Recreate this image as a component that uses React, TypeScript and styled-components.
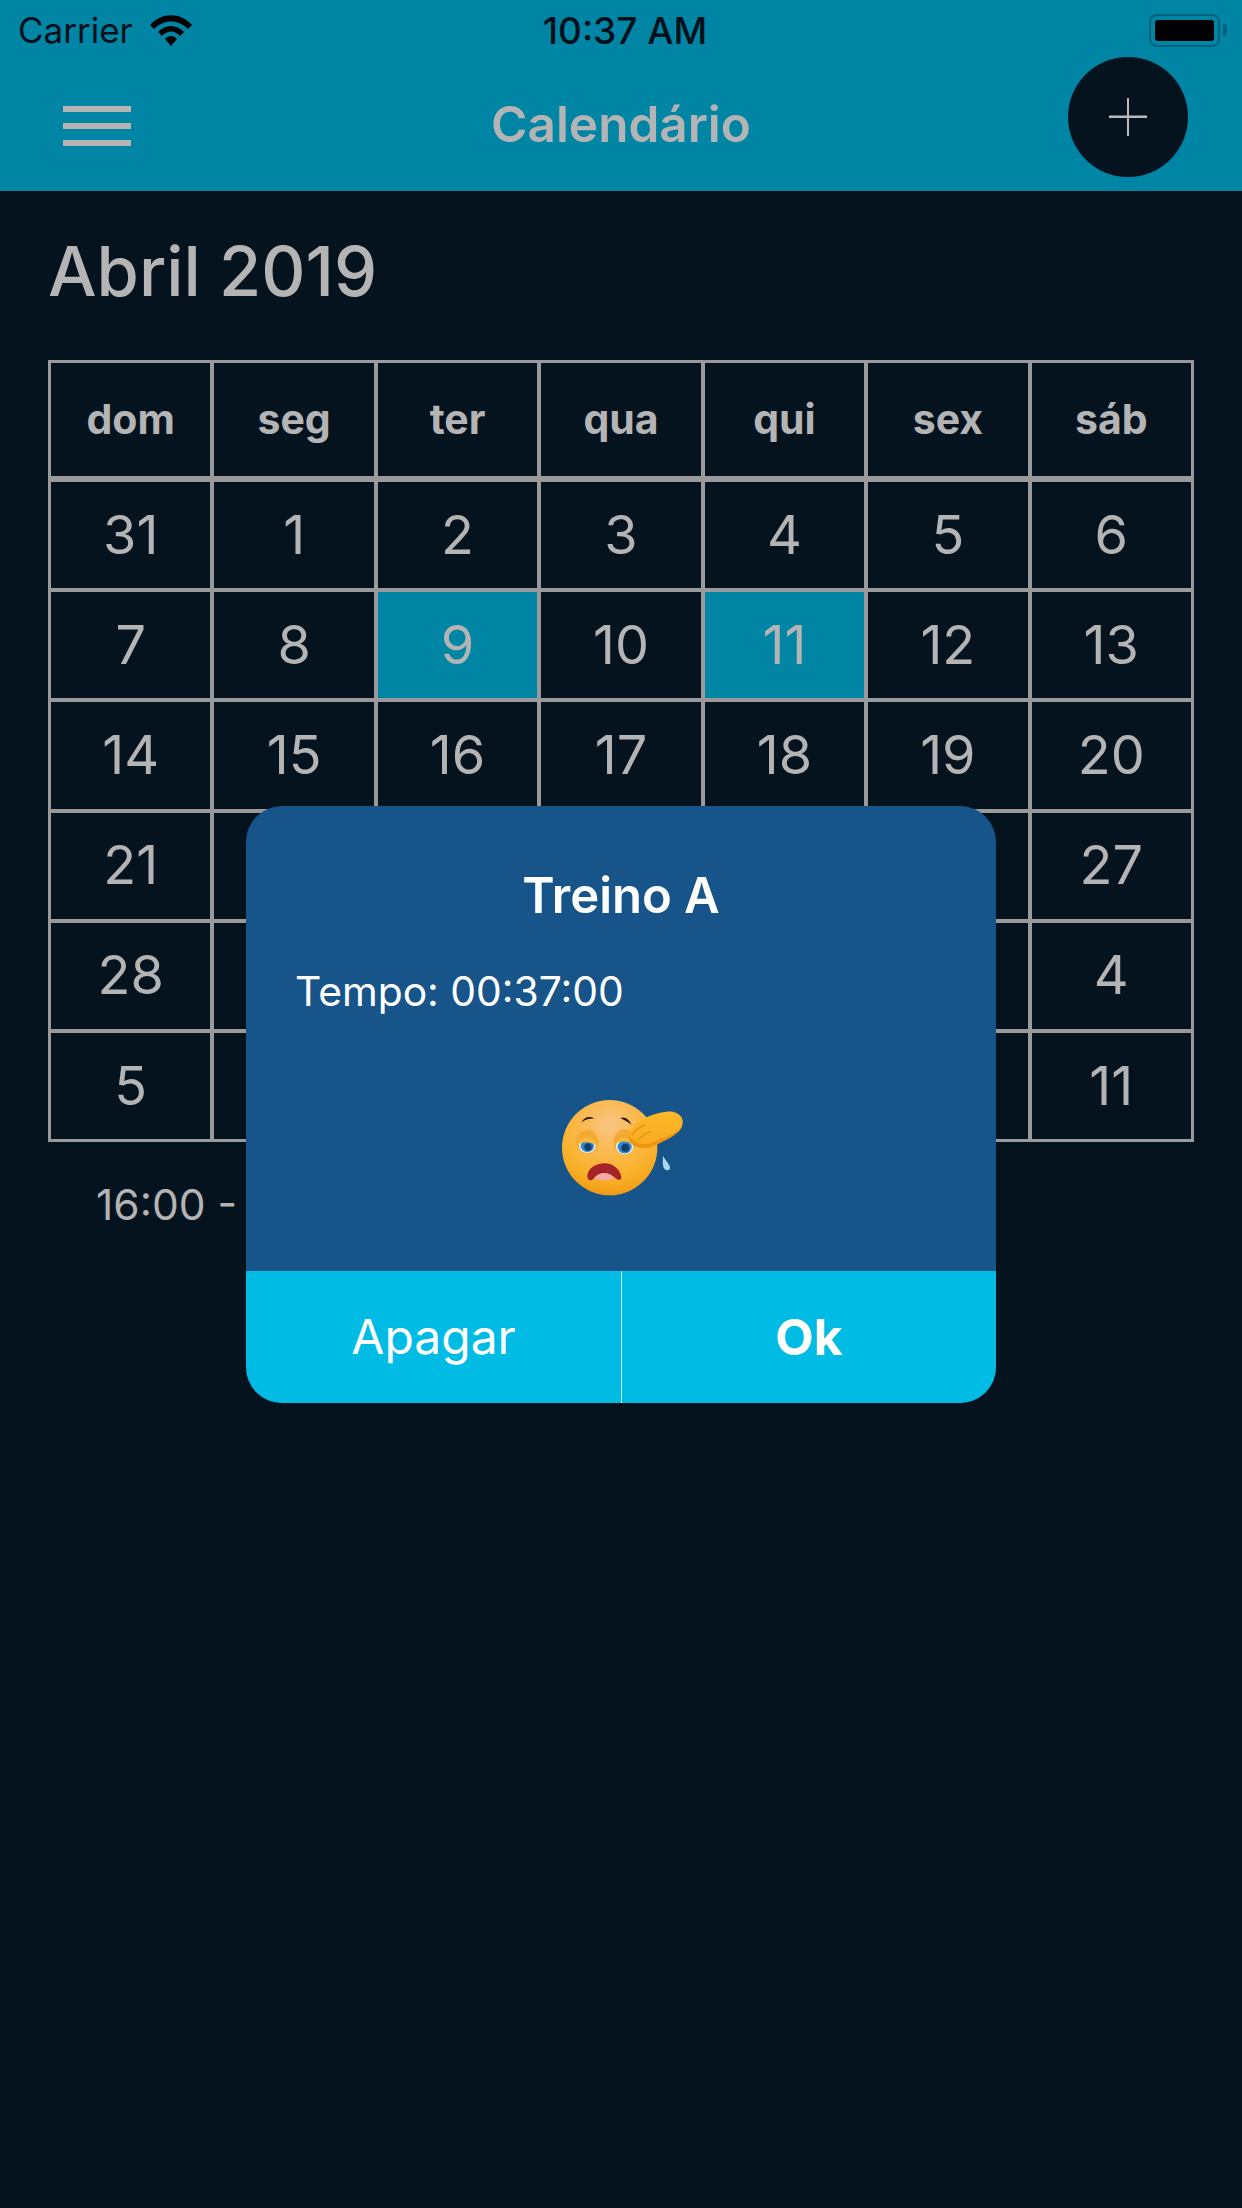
import styled, { createGlobalStyle } from 'styled-components';

const GlobalStyle = createGlobalStyle`
	html, body {
		margin: 0;
		padding: 0;
		background: #05131f;
	}
	* {
		box-sizing: border-box;
	}
`;

const Screen = styled.div`
	position: relative;
	width: 1242px;
	height: 2208px;
	overflow: hidden;
	background: #05131f;
	font-family: Inter, 'Liberation Sans', sans-serif;
	color: #b4b4b4;
`;

const Header = styled.header`
	height: 191px;
	background: #0085a5;
`;

const StatusBar = styled.div`
	display: grid;
	grid-template-columns: 1fr auto 1fr;
	align-items: center;
	height: 60px;
	padding: 0 15px 0 18px;
	color: #03101a;
	font-size: 35px;
`;

const StatusLeft = styled.div`
	display: flex;
	align-items: center;
	gap: 17px;
`;

const Clock = styled.div`
	margin-left: 5px;
	font-size: 37px;
	font-weight: 500;
`;

const Battery = styled.div`
	justify-self: end;
	display: flex;
	align-items: center;
	gap: 3px;
`;

const BatteryBody = styled.div`
	width: 71px;
	height: 33px;
	padding: 4px;
	border: 2px solid #00627c;
	border-radius: 8px;
`;

const BatteryLevel = styled.div`
	height: 100%;
	background: #000;
	border-radius: 3px;
`;

const BatteryTip = styled.div`
	width: 4px;
	height: 12px;
	background: #00627c;
	border-radius: 0 4px 4px 0;
`;

const NavBar = styled.div`
	display: grid;
	grid-template-columns: 1fr auto 1fr;
	align-items: center;
	height: 131px;
	padding: 0 54px;
`;

const Burger = styled.div`
	display: flex;
	flex-direction: column;
	gap: 11px;
	width: 68px;
	margin: 1px 0 0 9px;
`;

const BurgerLine = styled.span`
	display: block;
	height: 6px;
	background: #b4b4b4;
`;

const NavTitle = styled.div`
	margin-top: -3px;
	font-size: 49.5px;
	font-weight: 600;
	color: #b4b4b4;
`;

const AddButton = styled.div`
	justify-self: end;
	margin-top: -17px;
	display: flex;
	align-items: center;
	justify-content: center;
	width: 120px;
	height: 120px;
	border-radius: 50%;
	background: #05131f;
`;

const Content = styled.main`
	padding: 0 48px;
`;

const MonthTitle = styled.h1`
	margin: 0;
	padding: 41px 0 48px;
	font-size: 68.5px;
	line-height: 80px;
	font-weight: 500;
	color: #b4b4b4;
`;

const Calendar = styled.div`
	display: grid;
	grid-template-columns: repeat(7, 1fr);
	gap: 4px;
	padding: 3px;
	background: #9a9a9c;
`;

const WeekDay = styled.div`
	display: flex;
	align-items: center;
	justify-content: center;
	height: 113px;
	margin-bottom: 2px;
	padding-bottom: 2px;
	background: #05131f;
	font-size: 41px;
	font-weight: 700;
`;

const Day = styled.div<{ $active?: boolean }>`
	display: flex;
	align-items: center;
	justify-content: center;
	height: 106.2px;
	padding-bottom: 2px;
	background: ${({ $active }) => ($active ? '#0085a5' : '#05131f')};
	font-size: 54px;
	font-weight: 375;
`;

const EventLine = styled.div`
	padding: 37px 0 0 48px;
	font-size: 42.5px;
	font-weight: 375;
`;

const Overlay = styled.div`
	position: absolute;
	inset: 0;
	display: flex;
	align-items: center;
	justify-content: center;
`;

const Modal = styled.div`
	display: flex;
	flex-direction: column;
	width: 750px;
	height: 597px;
	border-radius: 36px;
	overflow: hidden;
	background: #17548a;
	color: #fff;
`;

const ModalBody = styled.div`
	flex: 1;
	display: flex;
	flex-direction: column;
	padding: 62px 49px 0;
`;

const ModalTitle = styled.div`
	text-align: center;
	font-size: 49px;
	line-height: 56px;
	font-weight: 600;
`;

const ModalText = styled.div`
	margin-top: 42px;
	font-size: 40.8px;
	line-height: 50px;
	font-weight: 400;
`;

const EmojiSlot = styled.div`
	display: flex;
	justify-content: center;
	margin-top: 80px;
`;

const ModalActions = styled.div`
	display: grid;
	grid-template-columns: 1fr 1fr;
	height: 132px;
	background: #00bbe4;
`;

const ModalAction = styled.div<{ $primary?: boolean }>`
	display: flex;
	align-items: center;
	justify-content: center;
	font-size: ${({ $primary }) => ($primary ? 50 : 48)}px;
	font-weight: ${({ $primary }) => ($primary ? 700 : 400)};
	border-left: ${({ $primary }) => ($primary ? '1px solid #cfeef7' : 'none')};
`;

const WEEK_DAYS = ['dom', 'seg', 'ter', 'qua', 'qui', 'sex', 'sáb'];

const DAYS = [
	31, 1, 2, 3, 4, 5, 6,
	7, 8, 9, 10, 11, 12, 13,
	14, 15, 16, 17, 18, 19, 20,
	21, 22, 23, 24, 25, 26, 27,
	28, 29, 30, 1, 2, 3, 4,
	5, 6, 7, 8, 9, 10, 11,
];

const ACTIVE_INDEXES = [9, 11];

const WifiIcon = () => (
	<svg width="42" height="31" viewBox="0 0 42 31">
		<path d="M0 10 C12 -3 30 -3 42 10 L38 14 C28 4 14 4 4 14 Z" fill="#000" />
		<path d="M8 17 C15 9 27 9 34 17 L30 21 C25 15 17 15 12 21 Z" fill="#000" />
		<path d="M15 24 C18 20 24 20 27 24 L21 31 Z" fill="#000" />
	</svg>
);

const PlusIcon = () => (
	<svg width="38" height="38" viewBox="0 0 38 38">
		<rect x="0" y="17.5" width="38" height="2.5" fill="#b9b9b9" />
		<rect x="18" y="0" width="2" height="38" fill="#b9b9b9" />
	</svg>
);

// tired face, drawn in the coordinates of a 3x crop of the picture
const TiredEmoji = () => (
	<svg width="130" height="105" viewBox="0 0 390 315">
		<defs>
			<radialGradient id="face" cx="50%" cy="26%" r="76%">
				<stop offset="0%" stopColor="#f8c586" />
				<stop offset="30%" stopColor="#fabb58" />
				<stop offset="72%" stopColor="#fab22c" />
				<stop offset="100%" stopColor="#f09a10" />
			</radialGradient>
			<linearGradient id="arm" x1="0" y1="0" x2="0" y2="1">
				<stop offset="0%" stopColor="#fdb92a" />
				<stop offset="100%" stopColor="#f9a91f" />
			</linearGradient>
		</defs>
		<circle cx="161" cy="155" r="143" fill="url(#face)" />
		<path d="M76 80 C84 62 102 58 116 68 C102 66 88 70 76 80 Z" fill="#2a1606" />
		<path d="M193 66 C206 60 220 70 226 86 C216 78 204 72 193 66 Z" fill="#2a1606" />
		<ellipse cx="94" cy="138" rx="33" ry="36" fill="#f2ab30" />
		<ellipse cx="94" cy="150" rx="25" ry="21" fill="#dff0f8" />
		<ellipse cx="94" cy="151" rx="20" ry="17" fill="#2f86cc" />
		<circle cx="96" cy="153" r="11" fill="#143e6c" />
		<path d="M64 146 C72 118 112 116 124 150 C106 136 84 136 64 146 Z" fill="#f8b83e" />
		<ellipse cx="206" cy="138" rx="33" ry="38" fill="#f2ab30" />
		<ellipse cx="206" cy="152" rx="26" ry="23" fill="#dff0f8" />
		<ellipse cx="206" cy="153" rx="21" ry="19" fill="#2f86cc" />
		<circle cx="208" cy="155" r="12" fill="#143e6c" />
		<path d="M176 144 C186 116 220 118 238 150 C218 134 198 132 176 144 Z" fill="#f8b83e" />
		<path d="M94 238 C98 214 122 202 146 202 C170 202 190 218 196 242 C197 254 186 254 178 246 C158 228 132 228 114 246 C106 258 92 254 94 238 Z" fill="#a62427" />
		<path d="M114 247 C130 226 160 226 176 247 C158 254 132 254 114 247 Z" fill="#f6a9a6" />
		<path d="M218 118 C226 86 268 54 332 47 C368 44 390 66 376 96 C362 118 322 136 284 154 C256 164 212 148 218 118 Z" fill="url(#arm)" />
		<path d="M218 118 C212 148 256 164 284 154 C322 136 362 118 376 96 C360 112 318 128 282 142 C258 150 232 140 218 118 Z" fill="#ee9612" />
		<path d="M228 118 C238 102 252 92 268 86" fill="none" stroke="#e0901a" strokeWidth="4" />
		<path d="M244 134 C254 122 268 112 284 106" fill="none" stroke="#e0901a" strokeWidth="4" />
		<path d="M321 180 C328 192 344 208 342 218 C336 228 322 222 321 208 C320 198 320 190 321 180 Z" fill="#a9d7ee" />
	</svg>
);

const App = () => (
	<Screen>
		<GlobalStyle />
		<Header>
			<StatusBar>
				<StatusLeft>
					<span>Carrier</span>
					<WifiIcon />
				</StatusLeft>
				<Clock>10:37 AM</Clock>
				<Battery>
					<BatteryBody>
						<BatteryLevel />
					</BatteryBody>
					<BatteryTip />
				</Battery>
			</StatusBar>
			<NavBar>
				<Burger>
					<BurgerLine />
					<BurgerLine />
					<BurgerLine />
				</Burger>
				<NavTitle>Calendário</NavTitle>
				<AddButton>
					<PlusIcon />
				</AddButton>
			</NavBar>
		</Header>
		<Content>
			<MonthTitle>Abril 2019</MonthTitle>
			<Calendar>
				{WEEK_DAYS.map((name) => (
					<WeekDay key={name}>{name}</WeekDay>
				))}
				{DAYS.map((day, index) => (
					<Day key={index} $active={index < 14 && ACTIVE_INDEXES.includes(day)}>
						{day}
					</Day>
				))}
			</Calendar>
			<EventLine>16:00 - 17:00</EventLine>
		</Content>
		<Overlay>
			<Modal>
				<ModalBody>
					<ModalTitle>Treino A</ModalTitle>
					<ModalText>Tempo: 00:37:00</ModalText>
					<EmojiSlot>
						<TiredEmoji />
					</EmojiSlot>
				</ModalBody>
				<ModalActions>
					<ModalAction>Apagar</ModalAction>
					<ModalAction $primary>Ok</ModalAction>
				</ModalActions>
			</Modal>
		</Overlay>
	</Screen>
);

export default App;
